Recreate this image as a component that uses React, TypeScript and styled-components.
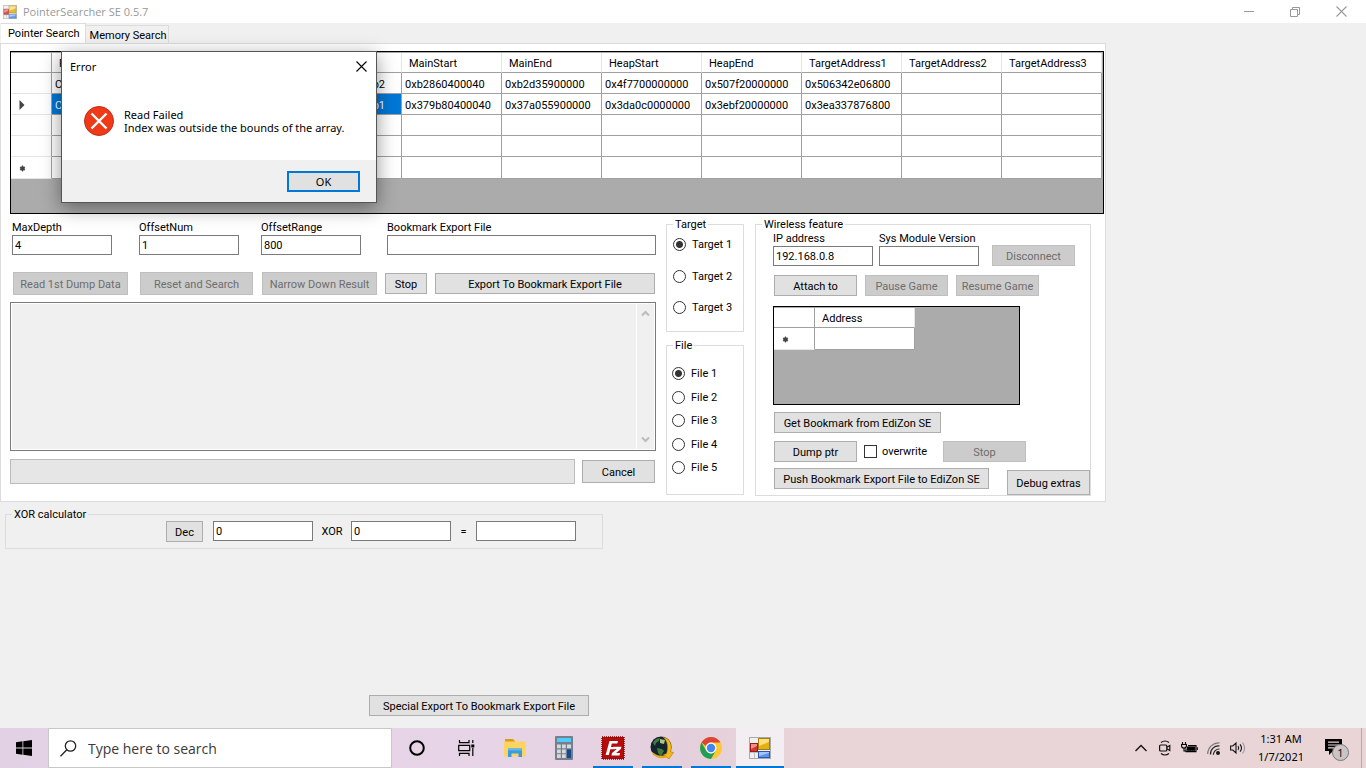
import React from "react";
import styled, { createGlobalStyle } from "styled-components";

const GlobalStyle = createGlobalStyle`
  * { box-sizing: border-box; }
  body {
    margin: 0;
    background: #f0f0f0;
    color: #000;
    font: 11px/13px Roboto, "Liberation Sans", Arial, sans-serif;
  }
  button, input, textarea { font: inherit; color: inherit; }
`;

const Window = styled.div`
  position: relative;
  min-height: 100vh;
  display: flex;
  flex-direction: column;
`;

/* ---- title bar ---- */

const TitleBar = styled.header`
  height: 23px;
  padding: 0 2px 0 3px;
  display: flex;
  align-items: center;
  background: #fff;
  color: #999;
`;

const Title = styled.h1`
  margin: 0 auto 0 6px;
  font: 11px/16px "Open Sans", "Segoe UI", sans-serif;
`;

const CaptionButton = styled.button`
  width: 46px;
  height: 22px;
  padding: 0;
  border: 0;
  background: none;
  display: grid;
  place-items: center;
`;

/* ---- tabs ---- */

const TabStrip = styled.div`
  height: 20px;
  padding-left: 1px;
  display: flex;
  align-items: flex-end;
`;

const Tab = styled.button<{ $active?: boolean }>`
  height: ${(p) => (p.$active ? 21 : 18)}px;
  margin-bottom: ${(p) => (p.$active ? -1 : 0)}px;
  padding: ${(p) => (p.$active ? "0 5px 2px 7px" : "1px 2px 0 4px")};
  border: 1px solid #dcdcdc;
  border-bottom: 0;
  border-left-width: 0;
  background: ${(p) => (p.$active ? "#fff" : "#f0f0f0")};
  white-space: nowrap;
`;

const Panel = styled.main`
  margin-right: 260px;
  padding: 7px 1px 5px 9px;
  border: 1px solid #dcdcdc;
  background: #fff;
`;

/* ---- data grids ---- */

const GridFrame = styled.div<{ $height: number; $width?: string }>`
  width: ${(p) => p.$width ?? "auto"};
  height: ${(p) => p.$height}px;
  padding: 1px 1px 0 0;
  border: 1px solid #000;
  background: #ababab;
`;

const Table = styled.table<{ $width?: string }>`
  width: ${(p) => p.$width ?? "100%"};
  table-layout: fixed;
  border-collapse: separate;
  border-spacing: 0;

  th, td {
    height: 21px;
    padding: 2px 3px 0;
    border: solid #a0a0a0;
    border-width: 0 1px 1px 0;
    background: #fff;
    font-weight: normal;
    text-align: left;
    white-space: nowrap;
  }
  thead th { height: 20px; padding: 1px 0 0 7px; border-right-color: #e5e5e5; }
  thead td { height: 20px; }
  tbody th { border-bottom-color: #e5e5e5; text-align: left; padding: 2px 8px 0; }
  tbody tr:last-child th, tbody tr:last-child td { height: 22px; }
  tbody th svg { display: block; }
`;

const PathCell = styled.td<{ $selected?: boolean }>`
  && {
    background: ${(p) => (p.$selected ? "#0078d7" : "#fff")};
    color: ${(p) => (p.$selected ? "#fff" : "#000")};
    padding-right: 16px;
  }
`;

const PathText = styled.span`
  display: flex;
  justify-content: space-between;
`;

/* ---- form controls ---- */

const Button = styled.button<{ $w?: number; $h?: number }>`
  width: ${(p) => (p.$w ? `${p.$w}px` : "auto")};
  height: ${(p) => p.$h ?? 21}px;
  padding: 1px 0 0;
  border: 1px solid #adadad;
  background: #e1e1e1;
  white-space: nowrap;
  &:disabled { background: #ccc; border-color: #bfbfbf; color: #6d6d6d; }
`;

const TextInput = styled.input`
  display: block;
  width: 100px;
  height: 20px;
  padding: 1px 2px 0;
  border: 1px solid #7a7a7a;
  border-radius: 0;
  background: #fff;
`;

const WideInput = styled(TextInput)`
  width: 100%;
`;

const Label = styled.label`
  display: block;
  line-height: 14px;
  white-space: nowrap;
`;

const Group = styled.fieldset`
  min-width: 0;
  margin: 0;
  padding: 0;
  border: 1px solid #dcdcdc;
`;

const Legend = styled.legend`
  margin-left: 6px;
  padding: 0 2px;
  line-height: 13px;
`;

const Lower = styled.div`
  margin-top: 4px;
  padding-right: 13px;
  display: grid;
  grid-template-columns: 1fr 79px 336px;
  column-gap: 10px;
`;

const SearchColumn = styled.div`
  display: flex;
  flex-direction: column;
`;

const FieldRow = styled.div`
  padding: 3px 0 0 2px;
  display: grid;
  grid-template-columns: 127px 122px 126px 1fr;
`;

const ActionRow = styled.div`
  margin: 17px 0 7px;
  padding: 0 1px 0 3px;
  display: grid;
  grid-template-columns: 127px 122px 123px 50px 1fr;
  align-items: center;
`;

const LogBox = styled.div`
  height: 149px;
  padding: 1px;
  display: flex;
  border: 1px solid #7a7a7a;
  background: #fff;
`;

const LogText = styled.textarea`
  flex: 1;
  min-width: 0;
  padding: 2px;
  border: 0;
  resize: none;
  background: #f0f0f0;
`;

const ScrollTrack = styled.div`
  width: 17px;
  margin-left: 1px;
  padding: 6px 0;
  display: flex;
  flex-direction: column;
  align-items: center;
  justify-content: space-between;
  background: #f0f0f0;
`;

const ProgressRow = styled.div`
  margin-top: 8px;
  padding-right: 1px;
  display: flex;
  align-items: center;
  gap: 7px;
`;

const Progress = styled.div`
  flex: 1;
  height: 25px;
  border: 1px solid #bcbcbc;
  background: #e6e6e6;
`;

const ChoiceColumn = styled.div`
  padding-right: 1px;
  display: flex;
  flex-direction: column;
  gap: 7px;
`;

const RadioList = styled.div<{ $height: number; $padding: string }>`
  height: ${(p) => p.$height}px;
  padding: ${(p) => p.$padding};
  display: flex;
  flex-direction: column;
  justify-content: space-between;
`;

const Choice = styled.label`
  display: flex;
  align-items: center;
  gap: 6px;
  line-height: 13px;
  white-space: nowrap;
`;

const Radio = styled.input`
  appearance: none;
  width: 13px;
  height: 13px;
  margin: 0;
  border: 1px solid #333;
  border-radius: 50%;
  background: #fff;
  &:checked { background: radial-gradient(circle, #333 0 3px, #fff 4px); }
`;

const CheckBox = styled.input`
  appearance: none;
  width: 13px;
  height: 13px;
  margin: 0;
  border: 1px solid #333;
  background: #fff;
`;

const WirelessBody = styled.div`
  padding: 1px 0 0 17px;
`;

const Row = styled.div<{ $gap: number; $top?: number; $indent?: number; $align?: string }>`
  margin-top: ${(p) => p.$top ?? 0}px;
  margin-left: ${(p) => p.$indent ?? 0}px;
  display: flex;
  align-items: ${(p) => p.$align ?? "flex-end"};
  gap: ${(p) => p.$gap}px;
`;

const OverwriteChoice = styled(Choice)`
  width: 72px;
  height: 21px;
  gap: 5px;
`;

/* ---- below the tab panel ---- */

const XorGroup = styled(Group)`
  max-width: 598px;
  margin: 6px 5px 0;
`;

const XorRow = styled.div`
  height: 27px;
  padding-right: 26px;
  display: flex;
  justify-content: flex-end;
  align-items: flex-start;
`;

const XorLabel = styled.label<{ $w: number }>`
  width: ${(p) => p.$w}px;
  line-height: 22px;
  text-align: center;
`;

const XorInput = styled(TextInput)`
  margin-left: 10px;
`;

const Footer = styled.div`
  margin-top: auto;
  padding: 0 0 12px 369px;
`;

/* ---- error dialog ---- */

const Dialog = styled.section`
  position: absolute;
  left: 61px;
  top: 51px;
  width: 316px;
  border: 1px solid #555;
  background: #fff;
  box-shadow: 0 5px 18px rgba(0, 0, 0, 0.42);
  font: 11px/13px "Noto Sans", "Segoe UI", sans-serif;
`;

const DialogHeader = styled.div`
  height: 28px;
  padding: 0 0 0 8px;
  display: flex;
  align-items: center;
  justify-content: space-between;
`;

const DialogTitle = styled.h2`
  margin: 0;
  font: inherit;
`;

const DialogClose = styled(CaptionButton)`
  width: 30px;
`;

const DialogBody = styled.div`
  height: 80px;
  padding: 26px 22px 0;
  display: flex;
  gap: 10px;
`;

const Message = styled.p`
  margin: 2px 0 0;
  white-space: nowrap;
`;

const DialogFooter = styled.div`
  height: 42px;
  padding: 11px 16px 10px;
  display: flex;
  justify-content: flex-end;
  background: #f0f0f0;
`;

const OkButton = styled(Button)`
  padding: 0;
  border: 2px solid #0078d7;
`;

/* ---- taskbar ---- */

const Taskbar = styled.footer`
  height: 40px;
  display: flex;
  background: linear-gradient(90deg, #e2d0e4 0, #e7d4e7 35%, #e4d0dc 50%, #e9d4d8 60%, #e9d4d6 100%);
  font-family: "Noto Sans", "Segoe UI", sans-serif;
`;

const StartButton = styled.button`
  width: 48px;
  padding: 0;
  border: 0;
  background: none;
  display: grid;
  place-items: center;
`;

const SearchBox = styled.label`
  width: 344px;
  padding-left: 11px;
  display: flex;
  align-items: center;
  gap: 11px;
  border: 1px solid #c8c8c8;
  background: #fff;
`;

const SearchInput = styled.input`
  flex: 1;
  min-width: 0;
  padding: 1px 0 0;
  border: 0;
  outline: 0;
  background: none;
  font: 14px/20px "Open Sans", "Segoe UI", sans-serif;
  &::placeholder { color: #3a3a3a; opacity: 1; }
`;

const Apps = styled.nav`
  padding-left: 1px;
  display: flex;
  gap: 1px;
`;

const AppButton = styled.button<{ $state?: "running" | "active" }>`
  width: 48px;
  padding: 0;
  border: 0;
  display: grid;
  place-items: center;
  background:
    linear-gradient(#0078d7, #0078d7) center bottom /
      ${(p) => (p.$state === "active" ? "48px 2px" : p.$state === "running" ? "40px 2px" : "0 0")}
      no-repeat
      ${(p) => (p.$state === "active" ? "#f3eef1" : "transparent")};
`;

const Tray = styled.div`
  margin-left: auto;
  padding-right: 4px;
  display: flex;
`;

const TrayButton = styled.button<{ $w?: number }>`
  width: ${(p) => p.$w ?? 24}px;
  padding: 0;
  border: 0;
  background: none;
  display: grid;
  place-items: center;
`;

const Clock = styled(TrayButton)`
  padding-right: 2px;
  align-content: center;
  font: 11px/18px "Noto Sans", "Segoe UI", sans-serif;
  white-space: nowrap;
`;

const NoticeButton = styled(TrayButton)`
  border-right: 1px solid #b9a9ac;
`;

/* ---- drawings ---- */

const FormIcon = ({ size, faded }: { size: number; faded?: boolean }) => (
  <svg width={size} height={size} viewBox="0 0 22 22" opacity={faded ? 0.85 : 1} aria-hidden="true">
    <rect x=".5" y=".5" width="21" height="21" fill="#f0f0f3" stroke="#a9a9a9" />
    <path d="M1 15.500h20M5.500 15v6" stroke="#c0c0c0" />
    <rect x="9.500" y="1.500" width="11" height="11" fill="#e3b112" stroke="#a87d10" />
    <path d="M10 2h10v3l-10 4z" fill="#fbe07c" />
    <rect x="1.500" y="6.500" width="7" height="8" fill="#cf3a30" stroke="#9c1d18" />
    <path d="M2 7h6v2l-6 3z" fill="#ef8f85" />
    <rect x="9.500" y="14.500" width="11" height="6" fill="#5b93ee" stroke="#2857b5" />
    <path d="M10 15h10v1l-10 3z" fill="#a4c6fb" />
  </svg>
);

const Cross = ({ size, color }: { size: number; color: string }) => (
  <svg width={size} height={size} viewBox="0 0 11 11" aria-hidden="true">
    <path d="M.5.5l10 10M10.500.5l-10 10" stroke={color} strokeWidth="1.100" fill="none" />
  </svg>
);

const NewRowMark = () => (
  <svg width="7" height="7" viewBox="0 0 7 7" aria-hidden="true">
    <path d="M3.500 .5v6M1 2l5 3M6 2l-5 3" stroke="#555" strokeWidth="1.200" />
    <circle cx="3.500" cy="3.500" r="2.200" fill="#444" />
  </svg>
);

const Chevron = ({ up }: { up?: boolean }) => (
  <svg width="9" height="7" viewBox="0 0 9 7" aria-hidden="true">
    <path d={up ? "M1 5.500L4.500 2 8 5.500" : "M1 1.500L4.500 5 8 1.500"} stroke="#bcbcbc" strokeWidth="2" fill="none" />
  </svg>
);

const columns = ["MainStart", "MainEnd", "HeapStart", "HeapEnd", "TargetAddress1", "TargetAddress2", "TargetAddress3"];
const dumps = [
  { tail: "b2", cells: ["0xb2860400040", "0xb2d35900000", "0x4f7700000000", "0x507f20000000", "0x506342e06800", "", ""] },
  { tail: "b1", cells: ["0x379b80400040", "0x37a055900000", "0x3da0c0000000", "0x3ebf20000000", "0x3ea337876800", "", ""] },
  { tail: "", cells: ["", "", "", "", "", "", ""] },
  { tail: "", cells: ["", "", "", "", "", "", ""] },
  { tail: "", cells: ["", "", "", "", "", "", ""] },
];

const DumpGrid = () => (
  <GridFrame $height={163}>
    <Table>
      <colgroup>
        <col style={{ width: "3.76%" }} />
        <col style={{ width: "32.08%" }} />
        {columns.map((c) => <col key={c} />)}
      </colgroup>
      <thead>
        <tr>
          <td />
          <th scope="col">P</th>
          {columns.map((c) => <th scope="col" key={c}>{c}</th>)}
        </tr>
      </thead>
      <tbody>
        {dumps.map((d, i) => (
          <tr key={i}>
            <th scope="row">
              {i === 1 && (
                <svg width="6" height="10" viewBox="0 0 6 10" aria-hidden="true"><path d="M.5 0l5 5-5 5z" fill="#444" /></svg>
              )}
              {i === 4 && <NewRowMark />}
            </th>
            <PathCell $selected={i === 1}>
              {d.tail && <PathText><span>C</span><span>{d.tail}</span></PathText>}
            </PathCell>
            {d.cells.map((c, j) => <td key={j}>{c}</td>)}
          </tr>
        ))}
      </tbody>
    </Table>
  </GridFrame>
);

const SearchPane = () => (
  <SearchColumn>
    <FieldRow>
      <div><Label htmlFor="depth">MaxDepth</Label><TextInput id="depth" defaultValue="4" /></div>
      <div><Label htmlFor="num">OffsetNum</Label><TextInput id="num" defaultValue="1" /></div>
      <div><Label htmlFor="range">OffsetRange</Label><TextInput id="range" defaultValue="800" /></div>
      <div><Label htmlFor="export">Bookmark Export File</Label><WideInput id="export" /></div>
    </FieldRow>
    <ActionRow>
      <Button $w={115} $h={23} disabled>Read 1st Dump Data</Button>
      <Button $w={113} $h={23} disabled>Reset and Search</Button>
      <Button $w={115} $h={23} disabled>Narrow Down Result</Button>
      <Button $w={42}>Stop</Button>
      <Button>Export To Bookmark Export File</Button>
    </ActionRow>
    <LogBox>
      <LogText readOnly aria-label="Result" />
      <ScrollTrack><Chevron up /><Chevron /></ScrollTrack>
    </LogBox>
    <ProgressRow>
      <Progress role="progressbar" aria-label="Search progress" />
      <Button $w={73} $h={23}>Cancel</Button>
    </ProgressRow>
  </SearchColumn>
);

const ChoicePane = () => (
  <ChoiceColumn>
    <Group>
      <Legend>Target</Legend>
      <RadioList $height={100} $padding="7px 0 17px 6px">
        {[1, 2, 3].map((n) => (
          <Choice key={n}><Radio type="radio" name="target" defaultChecked={n === 1} />Target {n}</Choice>
        ))}
      </RadioList>
    </Group>
    <Group>
      <Legend>File</Legend>
      <RadioList $height={142} $padding="15px 0 20px 5px">
        {[1, 2, 3, 4, 5].map((n) => (
          <Choice key={n}><Radio type="radio" name="file" defaultChecked={n === 1} />File {n}</Choice>
        ))}
      </RadioList>
    </Group>
  </ChoiceColumn>
);

const WirelessPane = () => (
  <Group>
    <Legend>Wireless feature</Legend>
    <WirelessBody>
      <Row $gap={6}>
        <div><Label htmlFor="ip">IP address</Label><TextInput id="ip" defaultValue="192.168.0.8" /></div>
        <div><Label htmlFor="sys">Sys Module Version</Label><TextInput id="sys" /></div>
        <Row $gap={0} $indent={7}><Button $w={83} disabled>Disconnect</Button></Row>
      </Row>
      <Row $gap={8} $top={9} $indent={1}>
        <Button $w={83}>Attach to</Button>
        <Button $w={83} disabled>Pause Game</Button>
        <Button $w={83} disabled>Resume Game</Button>
      </Row>
      <Row $gap={0} $top={10}>
        <GridFrame $height={99} $width="247px">
          <Table $width="141px">
            <colgroup><col style={{ width: 41 }} /><col /></colgroup>
            <thead><tr><td /><th scope="col">Address</th></tr></thead>
            <tbody><tr><th scope="row"><NewRowMark /></th><td /></tr></tbody>
          </Table>
        </GridFrame>
      </Row>
      <Row $gap={0} $top={7} $indent={1}>
        <Button $w={167}>Get Bookmark from EdiZon SE</Button>
      </Row>
      <Row $gap={7} $top={8} $indent={1}>
        <Button $w={83}>Dump ptr</Button>
        <OverwriteChoice><CheckBox type="checkbox" />overwrite</OverwriteChoice>
        <Button $w={83} disabled>Stop</Button>
      </Row>
      <Row $gap={18} $top={6} $indent={1} $align="flex-start">
        <Button $w={215}>Push Bookmark Export File to EdiZon SE</Button>
        <Row $gap={0} $top={2}><Button $w={83} $h={25}>Debug extras</Button></Row>
      </Row>
    </WirelessBody>
  </Group>
);

const ErrorDialog = () => (
  <Dialog role="alertdialog" aria-labelledby="error-title">
    <DialogHeader>
      <DialogTitle id="error-title">Error</DialogTitle>
      <DialogClose aria-label="Close"><Cross size={11} color="#000" /></DialogClose>
    </DialogHeader>
    <DialogBody>
      <svg width="30" height="30" viewBox="0 0 30 30" aria-hidden="true">
        <circle cx="15" cy="15" r="14.500" fill="#f03a17" stroke="#b8301a" />
        <path d="M7.500 7.500l15 15M22.500 7.500l-15 15" stroke="#fff" strokeWidth="2.400" />
      </svg>
      <Message>Read Failed<br />Index was outside the bounds of the array.</Message>
    </DialogBody>
    <DialogFooter><OkButton $w={73}>OK</OkButton></DialogFooter>
  </Dialog>
);

const TaskbarView = () => (
  <Taskbar>
    <StartButton aria-label="Start">
      <svg width="16" height="16" viewBox="0 0 16 16"><path d="M0 2.200l6.500-.9v6.200H0zM7.300 1.200L16 0v7.500H7.300zM0 8.400h6.500v6.300L0 13.800zM7.300 8.400H16V16l-8.700-1.200z" /></svg>
    </StartButton>
    <SearchBox>
      <svg width="17" height="17" viewBox="0 0 17 17" fill="none" stroke="#222" strokeWidth="1.300" aria-hidden="true">
        <circle cx="10.500" cy="6" r="5.200" /><path d="M6.800 9.800L.5 16.200" />
      </svg>
      <SearchInput placeholder="Type here to search" />
    </SearchBox>
    <Apps>
      <AppButton aria-label="Cortana">
        <svg width="16" height="16" viewBox="0 0 16 16"><circle cx="8" cy="8" r="6.800" fill="none" stroke="#000" strokeWidth="2" /></svg>
      </AppButton>
      <AppButton aria-label="Task view">
        <svg width="17" height="16" viewBox="0 0 17 16" fill="none" stroke="#000" strokeWidth="1.200">
          <path d="M1.500 0v2.700h9.500V0M1.500 16v-2.700h9.500V16M.7 5.300h11v5.400H.7zM14.800 0v3M14.800 8v8" /><path d="M13.300 4.500h3v3h-3z" fill="#000" stroke="none" />
        </svg>
      </AppButton>
      <AppButton aria-label="File Explorer">
        <svg width="22" height="20" viewBox="0 0 22 20">
          <path d="M1 1h8l2 2v4H1z" fill="#dd9b14" /><rect y="3.500" width="21.500" height="15" rx=".5" fill="#fcd462" />
          <path d="M4 19v-8.500h14V19h-3.500v-3.500h-7V19z" fill="#3a9be0" /><path d="M4 10.500h14v2H4z" fill="#5fb7ef" />
        </svg>
      </AppButton>
      <AppButton aria-label="Calculator">
        <svg width="18" height="24" viewBox="0 0 18 24">
          <rect width="18" height="24" rx="1" fill="#75808c" /><rect x="2" y="2" width="14" height="4" fill="#4fcdf6" />
          <path d="M2 8.500h3.800v3.800H2zM7 8.500h3.800v3.800H7zM12 8.500h4v3.800h-4zM2 13.400h3.800v3.800H2zM7 13.400h3.800v3.800H7zM2 18.300h3.800v3.800H2zM7 18.300h3.800v3.800H7z" fill="#d5d9dd" />
          <path d="M12 13.400h4v8.700h-4z" fill="#14488f" />
        </svg>
      </AppButton>
      <AppButton aria-label="FileZilla" $state="running">
        <svg width="24" height="24" viewBox="0 0 24 24">
          <rect x="1" y="1" width="22" height="22" fill="#b40b0b" stroke="#8b0000" strokeWidth="1.500" strokeDasharray="1 1" />
          <path d="M8.500 5H17l-.7 2.600h-5.500l-.8 3.300h4.400l-.6 2.400H9.300L7.800 19H4.600z" fill="#fff" />
          <path d="M12.600 10.700h7.800l-.5 2.200-4.800 4h4l-.6 2.500h-8l.5-2.300 4.700-4.100h-3.600z" fill="#fff" />
        </svg>
      </AppButton>
      <AppButton aria-label="Web downloader" $state="running">
        <svg width="24" height="24" viewBox="0 0 24 24">
          <circle cx="11" cy="11" r="10.500" fill="#132430" />
          <path d="M3 7c1-3 4-5 7-5l-1 3-3 2-1 3zM7 12l5 1 2 2-3 5-3-3z" fill="#3f7d3a" /><path d="M10 3l5 1-1 4-4-1z" fill="#a9c684" />
          <path d="M13 1c7 1 10 9 7.500 15l3 .5-4.500 6.500-5.500-4.500 3-.8C18.500 12 18 5 13 1z" fill="#f4b91c" stroke="#aa7608" strokeWidth=".6" />
          <path d="M1.500 15.500c5 4 9 5 14 3.500l1 2.500C11 23.500 4 21.500 1.500 15.500z" fill="#e5a814" />
        </svg>
      </AppButton>
      <AppButton aria-label="Chrome" $state="running">
        <svg width="22" height="22" viewBox="0 0 22 22">
          <circle cx="11" cy="11" r="11" fill="#fcc934" />
          <path d="M1.500 5.500A11 11 0 0 1 20.500 5.500H11a5.500 5.500 0 0 0-5 3.500z" fill="#db4437" />
          <path d="M1.500 5.500A11 11 0 0 0 11 22l4.700-8.200a5.500 5.500 0 0 1-9.500 0z" fill="#1e9e57" />
          <circle cx="11" cy="11" r="5.400" fill="#fff" /><circle cx="11" cy="11" r="4.200" fill="#4285f4" />
        </svg>
      </AppButton>
      <AppButton aria-label="PointerSearcher" $state="active"><FormIcon size={22} /></AppButton>
    </Apps>
    <Tray>
      <TrayButton aria-label="Show hidden icons">
        <svg width="12" height="8" viewBox="0 0 12 8"><path d="M.5 7L6 1.500 11.500 7" fill="none" stroke="#111" strokeWidth="1.300" /></svg>
      </TrayButton>
      <TrayButton aria-label="Meet now">
        <svg width="12" height="16" viewBox="0 0 12 16" fill="none" stroke="#111" strokeWidth="1.200">
          <rect x=".6" y="5" width="7.200" height="6" rx="1" /><path d="M7.800 7.200l3-1.700v5l-3-1.700M2 2.500Q6-.5 10 2.500M2 13.500q4 3 8 0" />
        </svg>
      </TrayButton>
      <TrayButton aria-label="Battery">
        <svg width="17" height="12" viewBox="0 0 17 12" fill="none" stroke="#000" strokeWidth="1.100">
          <path d="M1.500 0v2M4.500 0v2M.6 2.500h4.800V4q0 2-2.400 2T.6 4zM3 6v3h2M7 3.600h8v6H5v-3" /><path d="M6.500 5h7.200v3.300H6.500z" fill="#000" /><path d="M16.300 5.300v2.600" />
        </svg>
      </TrayButton>
      <TrayButton aria-label="Network" $w={25}>
        <svg width="13" height="13" viewBox="0 0 13 13" fill="none" stroke="#222" strokeWidth="1.200">
          <path d="M.7 12A11 11 0 0 1 12.500 1" stroke="#777" /><path d="M3.500 12.500A8 8 0 0 1 12.500 4M6.300 12.700A6 6 0 0 1 12.500 7" /><circle cx="11" cy="11" r="1.400" fill="#000" />
        </svg>
      </TrayButton>
      <TrayButton aria-label="Volume">
        <svg width="16" height="14" viewBox="0 0 16 14" fill="none" stroke="#111" strokeWidth="1.100">
          <path d="M.6 5h2.200L6 2v10L2.800 9H.6zM8 5q1.500 2 0 4M10 3.300q3 3.700 0 7.400" /><path d="M12.500 1.500q4.200 5.500 0 11" stroke="#999" />
        </svg>
      </TrayButton>
      <Clock $w={64}><span>1:31 AM</span><span>1/7/2021</span></Clock>
      <NoticeButton aria-label="Notifications" $w={48}>
        <svg width="26" height="26" viewBox="0 0 26 26">
          <path d="M0 4h17v12H8l-4 4v-4H0z" fill="#000" /><path d="M3 7.200h11M3 10h11M3 12.800h7" stroke="#e9d4d6" strokeWidth="1.200" />
          <circle cx="15.500" cy="17.500" r="8" fill="#c9c4c5" stroke="#777" />
          <text x="15.500" y="21.500" fontSize="11" textAnchor="middle" fill="#111">1</text>
        </svg>
      </NoticeButton>
    </Tray>
  </Taskbar>
);

export default function App() {
  return (
    <Window>
      <GlobalStyle />
      <TitleBar>
        <FormIcon size={14} faded />
        <Title>PointerSearcher SE 0.5.7</Title>
        <CaptionButton aria-label="Minimize"><svg width="10" height="1"><path d="M0 .5h10" stroke="#999" /></svg></CaptionButton>
        <CaptionButton aria-label="Restore">
          <svg width="10" height="10" viewBox="0 0 10 10" fill="none" stroke="#999"><path d="M.5 2.500h7v7h-7zM2.500 2.500v-2h7v7h-2" /></svg>
        </CaptionButton>
        <CaptionButton aria-label="Close"><Cross size={11} color="#999" /></CaptionButton>
      </TitleBar>
      <TabStrip role="tablist">
        <Tab role="tab" aria-selected $active>Pointer Search</Tab>
        <Tab role="tab" aria-selected={false}>Memory Search</Tab>
      </TabStrip>
      <Panel>
        <DumpGrid />
        <Lower>
          <SearchPane />
          <ChoicePane />
          <WirelessPane />
        </Lower>
      </Panel>
      <XorGroup>
        <Legend>XOR calculator</Legend>
        <XorRow>
          <Button $w={37}>Dec</Button>
          <XorInput aria-label="First operand" defaultValue="0" />
          <XorLabel $w={38} htmlFor="xor-b">XOR</XorLabel>
          <TextInput id="xor-b" defaultValue="0" />
          <XorLabel $w={25} htmlFor="xor-result">=</XorLabel>
          <TextInput id="xor-result" />
        </XorRow>
      </XorGroup>
      <Footer><Button $w={220}>Special Export To Bookmark Export File</Button></Footer>
      <TaskbarView />
      <ErrorDialog />
    </Window>
  );
}
